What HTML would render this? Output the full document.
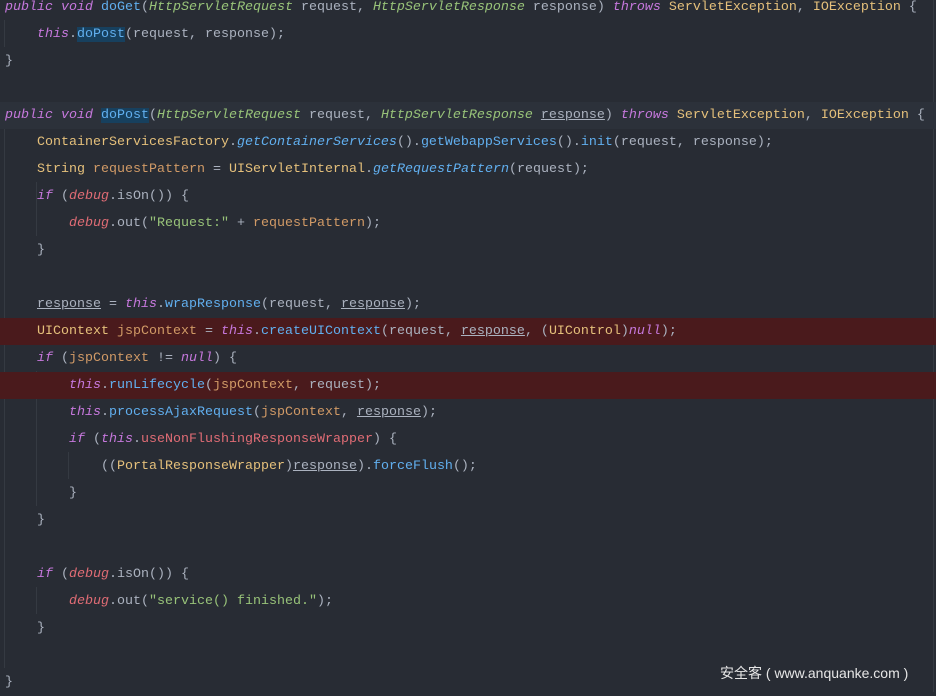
<!DOCTYPE html>
<html><head><meta charset="utf-8"><style>
html,body{margin:0;padding:0;background:#282c34;width:936px;height:692px;overflow:hidden;}
.c{position:absolute;left:0;top:0;width:936px;height:692px;font-family:"Liberation Mono",monospace;font-size:13.33px;color:#abb2bf;}
.l{position:absolute;left:0;width:936px;height:27px;line-height:27px;white-space:pre;padding-left:5px;box-sizing:border-box;}
.hl{background:#4a1a1c;}
.cur{background:#2c313a;}
.k{color:#c678dd;font-style:italic}
.f{color:#61afef}
.fi{color:#61afef;font-style:italic}
.t{color:#98c379;font-style:italic}
.y{color:#e5c07b}
.s{color:#98c379}
.r{color:#e06c75}
.ri{color:#e06c75;font-style:italic}
.o{color:#d19a66}
.u{text-decoration:underline}
.sel{background:#17405e}
.g{position:absolute;width:1px;background:#353a42}
.wm{position:absolute;left:720px;top:663px;font-family:"Liberation Sans","Noto Sans CJK SC",sans-serif;font-size:14px;color:#e6e6e6;white-space:pre;}
</style></head><body><div class="c">
<div class="g" style="left:4px;top:20px;height:27px"></div>
<div class="g" style="left:4px;top:128px;height:540px"></div>
<div class="g" style="left:36px;top:182px;height:54px"></div>
<div class="g" style="left:36px;top:371px;height:135px"></div>
<div class="g" style="left:68px;top:452px;height:27px"></div>
<div class="g" style="left:36px;top:587px;height:27px"></div>
<div class="g" style="left:933px;top:0;height:692px"></div>
<div class="l" style="top:-6px"><span class="k">public void</span> <span class="f">doGet</span>(<span class="t">HttpServletRequest</span> request, <span class="t">HttpServletResponse</span> response) <span class="k">throws</span> <span class="y">ServletException</span>, <span class="y">IOException</span> {</div>
<div class="l" style="top:21px">    <span class="k">this</span>.<span class="f sel">doPost</span>(request, response);</div>
<div class="l" style="top:48px">}</div>
<div class="l cur" style="top:102px"><span class="k">public void</span> <span class="f sel">doPost</span>(<span class="t">HttpServletRequest</span> request, <span class="t">HttpServletResponse</span> <span class="u">response</span>) <span class="k">throws</span> <span class="y">ServletException</span>, <span class="y">IOException</span> {</div>
<div class="l" style="top:129px">    <span class="y">ContainerServicesFactory</span>.<span class="fi">getContainerServices</span>().<span class="f">getWebappServices</span>().<span class="f">init</span>(request, response);</div>
<div class="l" style="top:156px">    <span class="y">String</span> <span class="o">requestPattern</span> = <span class="y">UIServletInternal</span>.<span class="fi">getRequestPattern</span>(request);</div>
<div class="l" style="top:183px">    <span class="k">if</span> (<span class="ri">debug</span>.isOn()) {</div>
<div class="l" style="top:210px">        <span class="ri">debug</span>.out(<span class="s">"Request:"</span> + <span class="o">requestPattern</span>);</div>
<div class="l" style="top:237px">    }</div>
<div class="l" style="top:291px">    <span class="u">response</span> = <span class="k">this</span>.<span class="f">wrapResponse</span>(request, <span class="u">response</span>);</div>
<div class="l hl" style="top:318px">    <span class="y">UIContext</span> <span class="o">jspContext</span> = <span class="k">this</span>.<span class="f">createUIContext</span>(request, <span class="u">response</span>, (<span class="y">UIControl</span>)<span class="k">null</span>);</div>
<div class="l" style="top:345px">    <span class="k">if</span> (<span class="o">jspContext</span> != <span class="k">null</span>) {</div>
<div class="l hl" style="top:372px">        <span class="k">this</span>.<span class="f">runLifecycle</span>(<span class="o">jspContext</span>, request);</div>
<div class="l" style="top:399px">        <span class="k">this</span>.<span class="f">processAjaxRequest</span>(<span class="o">jspContext</span>, <span class="u">response</span>);</div>
<div class="l" style="top:426px">        <span class="k">if</span> (<span class="k">this</span>.<span class="r">useNonFlushingResponseWrapper</span>) {</div>
<div class="l" style="top:453px">            ((<span class="y">PortalResponseWrapper</span>)<span class="u">response</span>).<span class="f">forceFlush</span>();</div>
<div class="l" style="top:480px">        }</div>
<div class="l" style="top:507px">    }</div>
<div class="l" style="top:561px">    <span class="k">if</span> (<span class="ri">debug</span>.isOn()) {</div>
<div class="l" style="top:588px">        <span class="ri">debug</span>.out(<span class="s">"service() finished."</span>);</div>
<div class="l" style="top:615px">    }</div>
<div class="l" style="top:669px">}</div>
<div class="wm">安全客 ( www.anquanke.com )</div>
</div></body></html>
